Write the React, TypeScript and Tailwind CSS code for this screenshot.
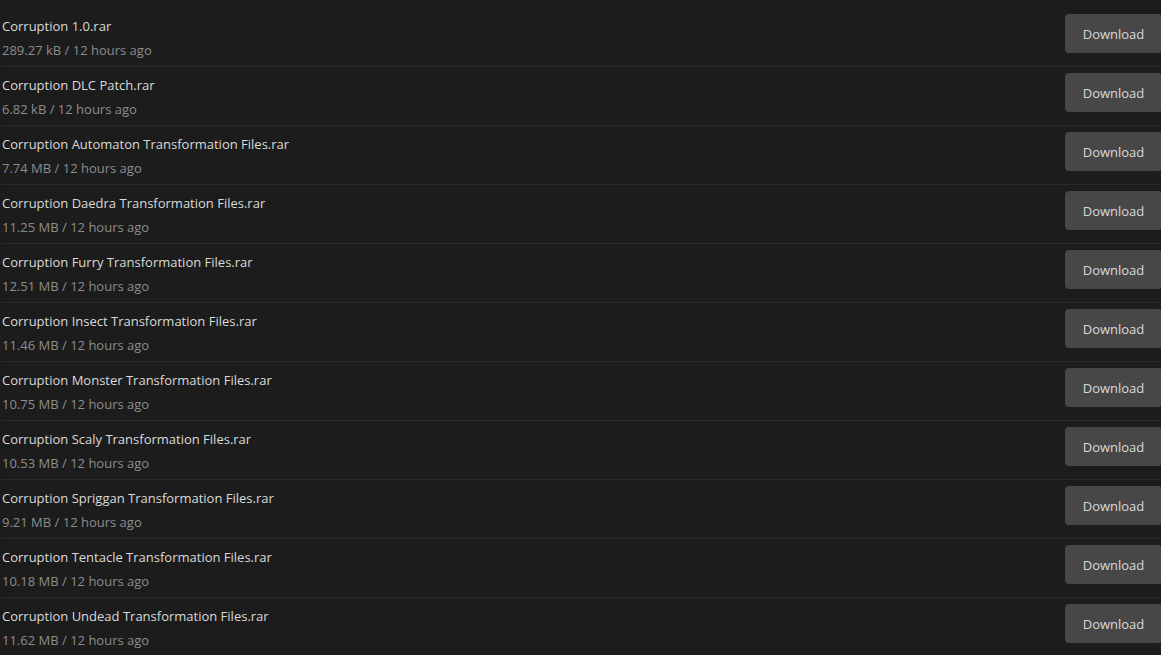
import React from "react";

const files: [string, string][] = [
  ["Corruption 1.0.rar", "289.27 kB / 12 hours ago"],
  ["Corruption DLC Patch.rar", "6.82 kB / 12 hours ago"],
  ["Corruption Automaton Transformation Files.rar", "7.74 MB / 12 hours ago"],
  ["Corruption Daedra Transformation Files.rar", "11.25 MB / 12 hours ago"],
  ["Corruption Furry Transformation Files.rar", "12.51 MB / 12 hours ago"],
  ["Corruption Insect Transformation Files.rar", "11.46 MB / 12 hours ago"],
  ["Corruption Monster Transformation Files.rar", "10.75 MB / 12 hours ago"],
  ["Corruption Scaly Transformation Files.rar", "10.53 MB / 12 hours ago"],
  ["Corruption Spriggan Transformation Files.rar", "9.21 MB / 12 hours ago"],
  ["Corruption Tentacle Transformation Files.rar", "10.18 MB / 12 hours ago"],
  ["Corruption Undead Transformation Files.rar", "11.62 MB / 12 hours ago"],
];

export default function App() {
  return (
    <div
      className="w-full h-screen overflow-hidden bg-[#1c1c1c]"
      style={{ fontFamily: '"Open Sans", "Noto Sans", sans-serif' }}
    >
      <div className="w-[1162px] pt-[8px] pl-[2px]">
        {files.map(([name, meta], i) => (
          <div
            key={i}
            className={`flex items-start justify-between pt-[6px] pb-[4px] ${
              i < files.length - 1 ? "border-b border-[#2b2b2b]" : ""
            }`}
          >
            <div className="flex flex-col">
              <div className="text-[13px] leading-[24px] text-[#dadada]">{name}</div>
              <div className="text-[13px] leading-[24px] text-[#8c8c8c]">{meta}</div>
            </div>
            <button className="w-[97px] h-[39px] pt-[2px] rounded-[4px] bg-[#474747] text-[13px] text-[#dadada]">
              Download
            </button>
          </div>
        ))}
      </div>
    </div>
  );
}
